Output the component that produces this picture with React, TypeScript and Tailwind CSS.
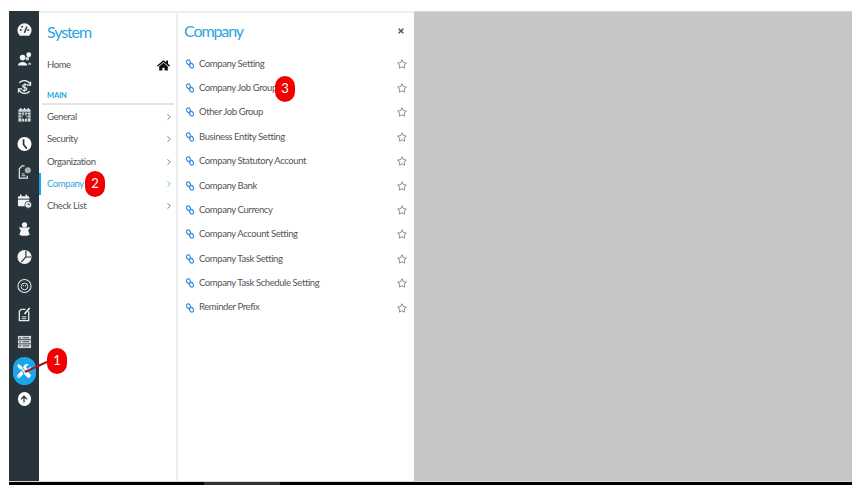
import { FaHome, FaTools, FaRegStar, FaTimes, FaArrowUp } from "react-icons/fa"
import { ChevronRight } from "lucide-react"
import type { ReactNode } from "react"

const mainItems = ["General", "Security", "Organization", "Company", "Check List"]

const companyItems = [
  "Company Setting",
  "Company Job Group",
  "Other Job Group",
  "Business Entity Setting",
  "Company Statutory Account",
  "Company Bank",
  "Company Currency",
  "Company Account Setting",
  "Company Task Setting",
  "Company Task Schedule Setting",
  "Reminder Prefix",
]

const DARK = "#27343c"

function Ico({ children }: { children: ReactNode }) {
  return (
    <svg width="15" height="16" viewBox="0 0 16 16" fill="none">
      {children}
    </svg>
  )
}

function LinkIcon() {
  return (
    <svg width="8" height="10" viewBox="0 0 9 11" fill="none" className="mr-[5px] shrink-0">
      <rect x="0.8" y="0.8" width="4" height="5.4" rx="2" stroke="#3a8fdc" strokeWidth="1.4" transform="rotate(-25 2.8 3.5)" />
      <rect x="4.2" y="4.8" width="4" height="5.4" rx="2" stroke="#3a8fdc" strokeWidth="1.4" transform="rotate(-25 6.2 7.5)" />
    </svg>
  )
}

function Rail({ children, active }: { children: ReactNode; active?: boolean }) {
  return (
    <div className="h-[28.4px] flex items-center justify-center text-[#f2f4f5] text-[14px]">
      {active ? (
        <div className="w-[23px] h-[28px] shrink-0 rounded-full bg-[#1ba6ea] flex items-center justify-center text-white">
          {children}
        </div>
      ) : (
        children
      )}
    </div>
  )
}

function Badge({ n, className }: { n: number; className: string }) {
  return (
    <div
      className={`absolute w-[20px] h-[26px] rounded-full bg-[#f00000] text-white text-[13px] flex items-center justify-center ${className}`}
    >
      {n}
    </div>
  )
}

export default function App() {
  return (
    <div className="w-[859px] h-[493px] bg-white pl-[9px] pt-[11px] overflow-hidden font-['Lato',sans-serif]">
      <div className="relative w-[843px]">
        <div className="flex h-[471px] border-b border-[#d8d8d8]">
          <div className="w-[30px] bg-[#27343c] pt-[5px] shrink-0">
            <Rail>
              <Ico>
                <path d="M3 14 A7.5 7.5 0 1 1 13 14 Z" fill="#f2f4f5" />
                <circle cx="4" cy="8" r="1" fill={DARK} />
                <circle cx="5.5" cy="4.5" r="1" fill={DARK} />
                <circle cx="12" cy="8" r="1" fill={DARK} />
                <path d="M8 11 L10.5 4.5" stroke={DARK} strokeWidth="1.6" />
              </Ico>
            </Rail>
            <Rail>
              <Ico>
                <circle cx="6" cy="6.5" r="3" fill="#f2f4f5" />
                <path d="M1 15 C1 10 11 10 11 15 Z" fill="#f2f4f5" />
                <circle cx="11" cy="7.5" r="2" fill="#c9ced1" />
                <circle cx="12.5" cy="3.5" r="2.6" fill="#f2f4f5" />
                <path d="M12 14 C12 11 15 11 15 14 Z" fill="#c9ced1" />
              </Ico>
            </Rail>
            <Rail>
              <Ico>
                <path d="M14 5 A7 7 0 0 0 2.5 3.5 M2 11 A7 7 0 0 0 13.5 12.5" stroke="#f2f4f5" strokeWidth="1.4" />
                <path d="M14.5 2 V6 H10.5 M1.5 14 V10 H5.5" stroke="#f2f4f5" strokeWidth="1.2" />
                <text x="8" y="12" textAnchor="middle" fontSize="11" fontWeight="700" fill="#f2f4f5">$</text>
              </Ico>
            </Rail>
            <Rail>
              <Ico>
                <rect x="1.5" y="2" width="13" height="13" fill="#d6dadc" />
                <path d="M4 0.5 V3 M8 0.5 V3 M12 0.5 V3" stroke="#f2f4f5" strokeWidth="1.4" />
                <path d="M1.5 5 H14.5 M1.5 8 H14.5 M1.5 11 H14.5 M5 5 V15 M8 5 V15 M11 5 V15" stroke={DARK} strokeWidth="0.8" />
                <rect x="6" y="8.5" width="4" height="3.5" fill={DARK} />
              </Ico>
            </Rail>
            <Rail>
              <Ico>
                <circle cx="8" cy="8" r="7.5" fill="#ffffff" />
                <path d="M7 3 V8.5 L10.5 13" stroke={DARK} strokeWidth="1.8" />
              </Ico>
            </Rail>
            <Rail>
              <Ico>
                <path d="M8 1.5 H5.5 L2.5 4.5 V14.5 H11 V12" stroke="#e6e9ea" strokeWidth="1.3" />
                <circle cx="11.5" cy="6" r="3.2" fill="#aab2b6" />
                <path d="M5 10 H8 M5 12 H9" stroke="#e6e9ea" strokeWidth="1" />
              </Ico>
            </Rail>
            <Rail>
              <Ico>
                <rect x="1" y="3" width="12" height="10.5" rx="1" fill="#f2f4f5" />
                <path d="M1 6 H13" stroke={DARK} strokeWidth="1" />
                <path d="M4 1 V4 M10 1 V4" stroke="#f2f4f5" strokeWidth="1.6" />
                <circle cx="12" cy="12" r="3.6" fill="#f2f4f5" stroke={DARK} strokeWidth="0.8" />
                <path d="M12 10 V12 H13.8" stroke={DARK} strokeWidth="0.9" />
              </Ico>
            </Rail>
            <Rail>
              <Ico>
                <circle cx="8" cy="3.5" r="2.8" fill="#f2f4f5" />
                <path d="M2 6 L5.5 6.5 H10.5 L14 6 L12 9.5 L13.5 14 Q8 16.5 2.5 14 L4 9.5 Z" fill="#f2f4f5" />
              </Ico>
            </Rail>
            <Rail>
              <Ico>
                <circle cx="8" cy="8" r="7.5" fill="#f2f4f5" />
                <path d="M9.5 1 V8 L4.5 13.5 M9.5 8 H15" stroke={DARK} strokeWidth="1.2" />
              </Ico>
            </Rail>
            <Rail>
              <Ico>
                <circle cx="8" cy="8" r="7" stroke="#e6e9ea" strokeWidth="1.1" />
                <circle cx="8" cy="8.5" r="3.6" stroke="#e6e9ea" strokeWidth="1" />
                <circle cx="6.8" cy="7.6" r="0.6" fill="#e6e9ea" />
                <circle cx="9.2" cy="7.6" r="0.6" fill="#e6e9ea" />
              </Ico>
            </Rail>
            <Rail>
              <Ico>
                <path d="M9 3 H4.5 L2.5 5 V15 H12.5 V5" stroke="#e6e9ea" strokeWidth="1.4" />
                <path d="M8 8 L13.5 1.5" stroke="#ffffff" strokeWidth="1.6" />
                <path d="M5 11 H10 M5 13 H10" stroke="#e6e9ea" strokeWidth="1" />
              </Ico>
            </Rail>
            <Rail>
              <Ico>
                <rect x="1" y="1.5" width="14" height="13" fill="#d6dadc" />
                <path d="M1 5.5 H15 M1 10 H15" stroke={DARK} strokeWidth="0.9" />
                <path d="M6 3.5 H13 M6 7.7 H13 M6 12.2 H13" stroke={DARK} strokeWidth="0.9" />
                <path d="M2.5 3.5 H4 M2.5 7.7 H4 M2.5 12.2 H4" stroke={DARK} strokeWidth="1.3" />
              </Ico>
            </Rail>
            <Rail active><FaTools /></Rail>
            <Rail>
              <div className="w-[13px] h-[14px] rounded-full bg-white text-[#27343c] flex items-center justify-center text-[8px]">
                <FaArrowUp />
              </div>
            </Rail>
          </div>

          <div className="w-[139px] shrink-0 bg-white border-r-2 border-t-2 border-[#eeeeee]">
            <div className="pl-[8px] pt-[7px] text-[16px] leading-[24px] tracking-[-1.1px] text-[#2aa5de]">System</div>
            <div className="flex items-center justify-between pl-[8px] pr-[6px] mt-[9px] h-[24px] text-[9.5px] tracking-[-0.4px] text-[#555]">
              <span>Home</span>
              <FaHome className="text-[13px] text-[#111]" />
            </div>
            <div className="pl-[8px] mt-[13px] text-[7.5px] leading-[12px] font-bold tracking-[-0.2px] text-[#2aa5de]">MAIN</div>
            <div className="ml-[3px] mr-[2px] mt-[1px] border-t-2 border-[#e4e4e4]" />
            <div className="pt-[1px]">
              {mainItems.map((item) => (
                <div
                  key={item}
                  className={`h-[22.3px] flex items-center justify-between pl-[6px] pr-[2px] text-[9.5px] tracking-[-0.4px] border-l-2 ${
                    item === "Company" ? "border-[#1ba6ea] text-[#2aa5de]" : "border-transparent text-[#555]"
                  }`}
                >
                  <span>{item}</span>
                  <ChevronRight size={10} strokeWidth={1.8} />
                </div>
              ))}
            </div>
          </div>

          <div className="w-[236px] shrink-0 bg-white border-t-2 border-[#eeeeee]">
            <div className="flex items-center justify-between pl-[6px] pr-[9px] pt-[6px]">
              <span className="text-[16px] leading-[24px] tracking-[-1.1px] text-[#2aa5de]">Company</span>
              <FaTimes className="text-[8px] text-[#555]" />
            </div>
            <div className="mt-[8.5px]">
              {companyItems.map((item) => (
                <div key={item} className="h-[24.4px] flex items-center pl-[8px] pr-[7px] text-[9.5px] tracking-[-0.4px] text-[#555]">
                  <LinkIcon />
                  <span className="flex-1">{item}</span>
                  <FaRegStar className="text-[10px] text-[#888]" />
                </div>
              ))}
            </div>
          </div>

          <div className="flex-1 bg-[#c6c6c6] border-t border-[#d4d4d4]" />
        </div>
        <div className="h-[3px] bg-black">
          <div className="ml-[195px] w-[76px] h-full bg-[#333]" />
        </div>

        <svg className="absolute left-[10px] top-[345px]" width="32" height="24" viewBox="0 0 32 24">
          <line x1="6" y1="16" x2="30" y2="5" stroke="#b01020" strokeWidth="2" />
        </svg>
        <Badge n={1} className="left-[38px] top-[337px]" />
        <Badge n={2} className="left-[76px] top-[160px]" />
        <Badge n={3} className="left-[266px] top-[65px]" />
      </div>
    </div>
  )
}
